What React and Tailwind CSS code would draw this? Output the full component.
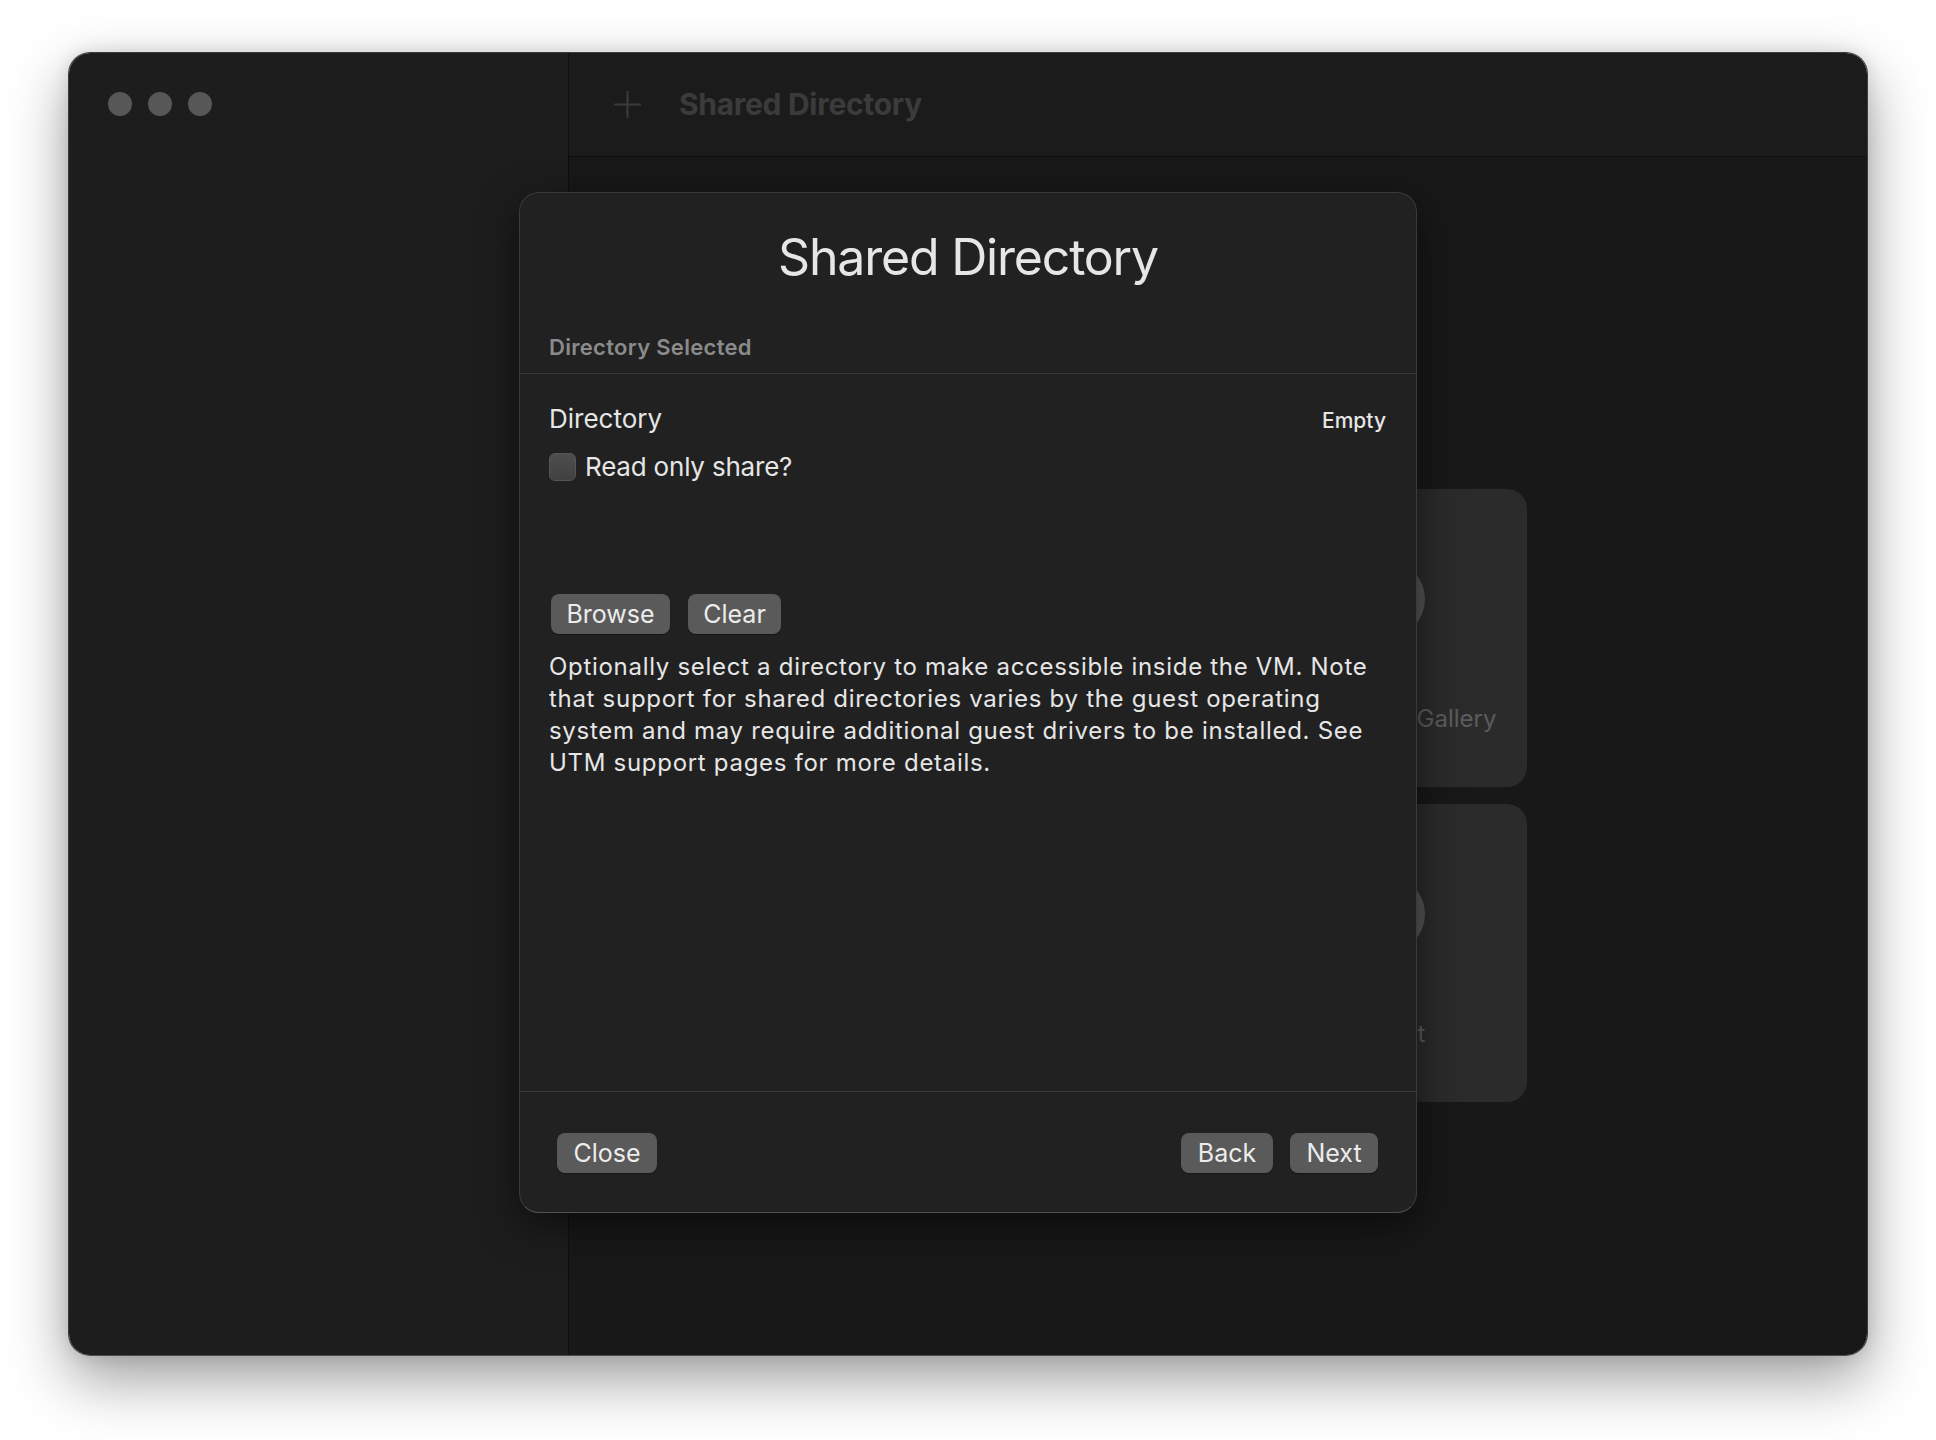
import { useState } from "react";

const font = { fontFamily: '"Inter", "Noto Sans", sans-serif' };

function SheetButton({ children, width }) {
  return (
    <button
      className={`h-[40px] ${width} flex items-center justify-center rounded-[8px] bg-[#5a5a5a] text-[25px] leading-none text-[#ececec] shadow-[0_1px_1px_rgba(0,0,0,0.35)]`}
    >
      {children}
    </button>
  );
}

function WelcomeCard({ label }) {
  return (
    <div className="h-[298px] rounded-[20px] bg-[#2b2b2b] flex flex-col items-center">
      <div className="mt-[71px] w-[78px] h-[78px] rounded-full bg-[#555555]" />
      {label && (
        <div className="mt-[68px] mr-[12px] text-[24px] leading-[26px] text-[#5c5c5c] whitespace-nowrap">
          {label}
        </div>
      )}
    </div>
  );
}

export default function App() {
  const [readOnly, setReadOnly] = useState(false);

  return (
    <div className="min-h-screen bg-white pt-[52px] pl-[68px]" style={font}>
      {/* ── Window ── */}
      <div className="relative w-[1800px] h-[1304px] flex rounded-[22px] overflow-hidden border border-[#3c3c3c] border-b-[#4c4c4c] shadow-[0_24px_60px_rgba(0,0,0,0.38),0_0_18px_rgba(0,0,0,0.12)]">
        {/* Sidebar */}
        <aside className="w-[500px] shrink-0 bg-[#1d1d1d] border-r border-[#0f0f0f]">
          <div className="flex gap-[16px] pl-[39px] pt-[39px]">
            <div className="w-[24px] h-[24px] rounded-full bg-[#575757]" />
            <div className="w-[24px] h-[24px] rounded-full bg-[#575757]" />
            <div className="w-[24px] h-[24px] rounded-full bg-[#575757]" />
          </div>
        </aside>

        {/* Main */}
        <div className="flex-1 flex flex-col min-w-0">
          <header className="h-[104px] shrink-0 flex items-center pl-[45px] gap-[38px] bg-[#1b1b1b] border-b border-[#101010]">
            <svg width="27" height="27" viewBox="0 0 27 27" className="text-[#3a3a3a]">
              <path d="M13.5 1v25M1 13.5h25" stroke="currentColor" strokeWidth="2.2" strokeLinecap="round" />
            </svg>
            <h1 className="text-[30px] font-bold tracking-[-0.3px] text-[#3b3b3b]">Shared Directory</h1>
          </header>
          <div className="flex-1 bg-[#181818] pl-[377px] pt-[332px]">
            <div className="grid grid-cols-[282px_282px] gap-[17px]">
              <WelcomeCard />
              <WelcomeCard label="Browse UTM Gallery" />
              <WelcomeCard />
              <WelcomeCard label="Support" />
            </div>
          </div>
        </div>

        {/* ── Sheet ── */}
        <div className="absolute left-[450px] top-[139px] w-[898px] h-[1021px] flex flex-col rounded-[20px] bg-[#212121] border border-[#3a3a3a] border-b-[#505050] shadow-[0_12px_40px_rgba(0,0,0,0.55)]">
          <div className="border-b border-[#3a3a3a]">
            <h2 className="pt-[38px] text-center text-[50px] leading-[52px] text-[#e6e6e6] tracking-[-1.2px]">
              Shared Directory
            </h2>
            <div className="mt-[50px] pl-[29px] pb-[12px] text-[22px] leading-[28px] font-semibold tracking-[0.3px] text-[#8b8b8b]">
              Directory Selected
            </div>
          </div>

          <div className="flex-1 pl-[29px] pr-[30px] pt-[29px]">
            <div className="flex items-baseline justify-between h-[32px]">
              <span className="text-[26px] leading-[32px] text-[#e6e6e6]">Directory</span>
              <span className="text-[21px] leading-[32px] font-medium text-[#e6e6e6]">Empty</span>
            </div>
            <label className="mt-[18px] h-[28px] flex items-center gap-[9px] cursor-pointer">
              <button
                onClick={() => setReadOnly(!readOnly)}
                className="w-[27px] h-[28px] rounded-[6px] bg-gradient-to-b from-[#4e4e4e] to-[#414141] border border-[#555555]"
              />
              <span className="text-[26px] leading-[28px] tracking-[-0.2px] text-[#e6e6e6]">Read only share?</span>
            </label>

            <div className="mt-[113px] flex gap-[18px] pl-[2px]">
              <SheetButton width="w-[119px]">Browse</SheetButton>
              <SheetButton width="w-[93px]">Clear</SheetButton>
            </div>

            <p className="mt-[17px] text-[24px] leading-[32px] tracking-[0.7px] text-[#e6e6e6]">
              Optionally select a directory to make accessible inside the VM. Note that support for shared
              directories varies by the guest operating system and may require additional guest drivers to be
              installed. See UTM support pages for more details.
            </p>
          </div>

          <div className="h-[121px] shrink-0 border-t border-[#3a3a3a] flex items-start justify-between pt-[41px] pl-[37px] pr-[38px]">
            <SheetButton width="w-[100px]">Close</SheetButton>
            <div className="flex gap-[17px]">
              <SheetButton width="w-[92px]">Back</SheetButton>
              <SheetButton width="w-[88px]">Next</SheetButton>
            </div>
          </div>
        </div>
      </div>
    </div>
  );
}
